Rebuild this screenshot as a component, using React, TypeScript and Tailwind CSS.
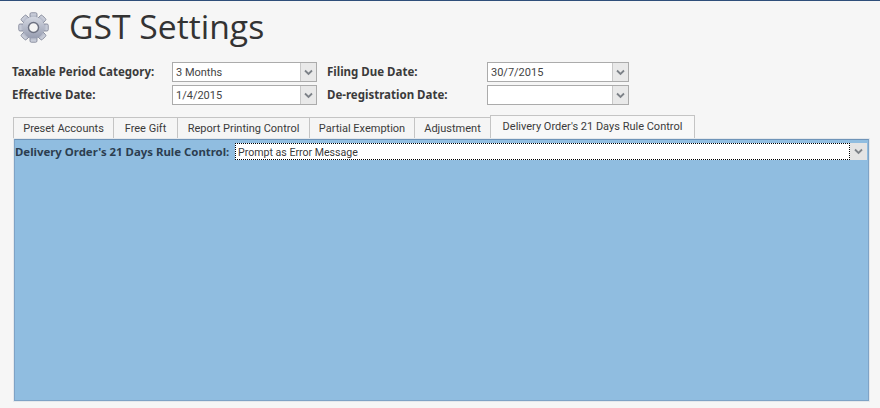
import React from "react";

const regular = { fontFamily: 'Roboto, "Noto Sans", sans-serif' };
const bold = { fontFamily: '"Noto Sans", sans-serif' };

function Chevron() {
  return (
    <svg width="9" height="7" viewBox="0 0 9 7" fill="none">
      <path d="M1 1.5 L4.5 5 L8 1.5" stroke="#7d8288" strokeWidth="1.8" />
    </svg>
  );
}

function Gear() {
  const teeth = [0, 45, 90, 135, 180, 225, 270, 315];
  return (
    <svg width="31" height="31" viewBox="0 0 32 32">
      <defs>
        <linearGradient id="g" x1="0" y1="0" x2="0" y2="1">
          <stop offset="0" stopColor="#d4d8e2" />
          <stop offset="1" stopColor="#969cb0" />
        </linearGradient>
      </defs>
      {teeth.map((a) => (
        <rect key={a} x="12.4" y="0.8" width="7.2" height="8" rx="1.4" fill="url(#g)" stroke="#7f8496" strokeWidth="0.9" transform={`rotate(${a} 16 16)`} />
      ))}
      <circle cx="16" cy="16" r="11.2" fill="url(#g)" />
      <circle cx="16" cy="16" r="5.2" fill="#f4f4f4" stroke="#6b7080" strokeWidth="1.5" />
    </svg>
  );
}

function Combo({ value, w }: { value: string; w: string }) {
  return (
    <div className={`flex h-[20px] ${w} border border-[#ababab] bg-white`}>
      <div className="flex-1 pl-[3px] pt-px text-[11px] leading-[18px] text-[#444444]" style={regular}>{value}</div>
      <div className="flex w-[16px] items-center justify-center border-l border-[#c8c8c8] bg-[#e9e9e9]">
        <Chevron />
      </div>
    </div>
  );
}

function Label({ children, w }: { children: React.ReactNode; w: string }) {
  return <div className={`${w} text-[11.5px] font-bold leading-[20px] text-[#3b3b3b]`} style={bold}>{children}</div>;
}

function Tab({ children, w }: { children: React.ReactNode; w: string }) {
  return (
    <div className={`${w} -mr-px flex h-[22px] items-center justify-center border border-b-0 border-[#c4c4c4] bg-[#f5f5f5] pt-[2px] text-[11px] text-[#3b3b3b]`} style={regular}>
      {children}
    </div>
  );
}

export default function App() {
  return (
    <div className="flex h-[408px] w-[880px] flex-col overflow-hidden border-t border-t-[#2f4f7a] bg-[#f6f6f6]">
      <div className="flex h-[52px] items-center pl-[18px]">
        <Gear />
        <h1 className="ml-[20px] text-[33.7px] leading-none text-[#333333]" style={{ fontFamily: '"Open Sans", sans-serif' }}>
          GST Settings
        </h1>
      </div>
      <div className="mt-[9px] flex flex-col gap-[3px] pl-[12px]">
        <div className="flex items-center">
          <Label w="w-[160px]">Taxable Period Category:</Label>
          <Combo value="3 Months" w="w-[145px]" />
          <div className="w-[10px]" />
          <Label w="w-[160px]">Filing Due Date:</Label>
          <Combo value="30/7/2015" w="w-[142px]" />
        </div>
        <div className="flex items-center">
          <Label w="w-[160px]">Effective Date:</Label>
          <Combo value="1/4/2015" w="w-[145px]" />
          <div className="w-[10px]" />
          <Label w="w-[160px]">De-registration Date:</Label>
          <Combo value="" w="w-[142px]" />
        </div>
      </div>
      <div className="ml-[13px] mt-[10px] flex h-[24px] items-end">
        <Tab w="w-[101px]">Preset Accounts</Tab>
        <Tab w="w-[65px]">Free Gift</Tab>
        <Tab w="w-[133px]">Report Printing Control</Tab>
        <Tab w="w-[106px]">Partial Exemption</Tab>
        <Tab w="w-[77px]">Adjustment</Tab>
        <div className="flex h-[24px] w-[205px] items-center justify-center border border-b-0 border-[#c4c4c4] bg-[#f8f8f8] text-[11px] text-[#3b3b3b]" style={regular}>
          Delivery Order's 21 Days Rule Control
        </div>
      </div>
      <div className="ml-[14px] h-[262px] w-[855px] border border-[#7fa3c6] border-t-[#6f94b8] bg-[#90bde0] pt-[3px] shadow-[0_0_0_1px_#e4e8ec]">
        <div className="flex h-[17px] items-center">
          <div className="w-[220px] text-[11.4px] font-bold leading-[17px] text-[#2c3e50]" style={bold}>Delivery Order's 21 Days Rule Control:</div>
          <div className="mr-px flex h-[17px] flex-1 bg-white">
            <div className="flex-1 border border-dotted border-black pl-[2px] pt-px text-[10.6px] leading-[15px] text-[#3b3b3b]" style={regular}>
              Prompt as Error Message
            </div>
            <div className="flex w-[17px] items-center justify-center bg-[#e4e4e4]">
              <Chevron />
            </div>
          </div>
        </div>
      </div>
    </div>
  );
}
